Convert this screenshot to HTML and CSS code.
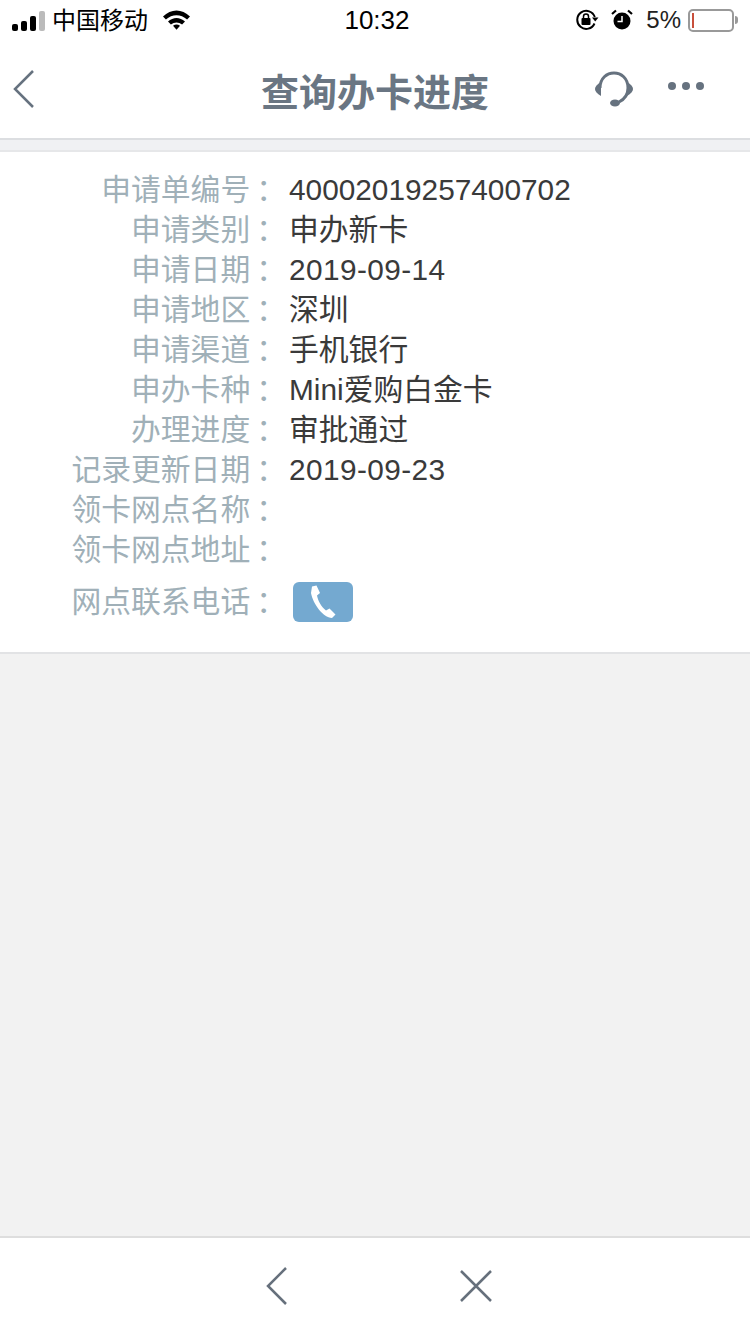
FILE: index.html
```html
<!DOCTYPE html>
<html lang="zh-CN">
<head>
    <meta charset="UTF-8">
    <meta name="viewport" content="width=device-width, initial-scale=1.0">
    <title>查询办卡进度</title>
    <link rel="stylesheet" href="styles.css">
</head>
<body>
    <div class="page">
        <!-- Status bar -->
        <div class="status-bar">
            <div class="status-left">
                <div class="signal">
                    <span class="bar bar-1"></span>
                    <span class="bar bar-2"></span>
                    <span class="bar bar-3"></span>
                    <span class="bar bar-4"></span>
                </div>
                <span class="carrier">中国移动</span>
                <svg class="wifi" width="29" height="20" viewBox="0 0 28 20">
                    <path d="M0.500 6.500C8.500-1.500 19.500-1.500 27.500 6.500L24.600 9.600C18.300 3.900 9.700 3.900 3.400 9.600Z" fill="#000"/>
                    <path d="M5.500 11.500C10.800 6.800 17.200 6.800 22.500 11.500L19.600 14.500C16.100 11.800 11.900 11.800 8.400 14.500Z" fill="#000"/>
                    <path d="M10.500 15.800C12.800 14.100 15.200 14.100 17.500 15.800L14 19.800Z" fill="#000"/>
                </svg>
            </div>
            <div class="status-time">10:32</div>
            <div class="status-right">
                <svg class="lock-icon" width="24" height="22" viewBox="0 0 24 22">
                    <path d="M19.500 14.500A9 9 0 1 1 19.800 8" fill="none" stroke="#000" stroke-width="2"/>
                    <path d="M17 8.500L23.500 8.500L20.200 12.500Z" fill="#000"/>
                    <rect x="6.500" y="9" width="9" height="7" rx="1" fill="#000"/>
                    <path d="M8.500 9V7.500A2.500 2.500 0 0 1 13.500 7.500V9" fill="none" stroke="#000" stroke-width="1.500"/>
                </svg>
                <svg class="alarm-icon" width="22" height="22" viewBox="0 0 22 22">
                    <circle cx="11" cy="12" r="8.500" fill="#000"/>
                    <path d="M11 7V12.500H6.500" fill="none" stroke="#fff" stroke-width="1.500"/>
                    <path d="M1 5L5 1.500M21 5L17 1.500" stroke="#000" stroke-width="2.200"/>
                </svg>
                <span class="battery-text">5%</span>
                <div class="battery">
                    <div class="battery-body"><span class="battery-level"></span></div>
                    <span class="battery-cap"></span>
                </div>
            </div>
        </div>

        <!-- Title bar -->
        <div class="nav-bar">
            <svg class="nav-back" width="24" height="40" viewBox="0 0 24 40">
                <path d="M21 2L3 20L21 38" fill="none" stroke="#66727f" stroke-width="2.500"/>
            </svg>
            <h1 class="nav-title">查询办卡进度</h1>
            <div class="nav-actions">
                <svg class="nav-service" width="38" height="36" viewBox="0 0 38 36">
                    <path d="M5 17C5 -3 33 -3 33 17C33 23 30 28 24 31" fill="none" stroke="#66727f" stroke-width="3"/>
                    <path d="M6 11C2 13 0 16 0 18C0 20 2 23 6 25Z" fill="#66727f"/>
                    <path d="M32 11C36 13 38 16 38 18C38 20 36 23 32 25Z" fill="#66727f"/>
                    <ellipse cx="20" cy="32" rx="5" ry="3.500" fill="#66727f"/>
                </svg>
                <div class="nav-more">
                    <span class="dot"></span>
                    <span class="dot"></span>
                    <span class="dot"></span>
                </div>
            </div>
        </div>

        <div class="nav-gap"></div>

        <!-- Application details -->
        <div class="detail-card">
            <div class="detail-row"><span class="detail-label">申请单编号<span class="colon">：</span></span><span class="detail-value">40002019257400702</span></div>
            <div class="detail-row"><span class="detail-label">申请类别<span class="colon">：</span></span><span class="detail-value">申办新卡</span></div>
            <div class="detail-row"><span class="detail-label">申请日期<span class="colon">：</span></span><span class="detail-value date-value">2019-09-14</span></div>
            <div class="detail-row"><span class="detail-label">申请地区<span class="colon">：</span></span><span class="detail-value">深圳</span></div>
            <div class="detail-row"><span class="detail-label">申请渠道<span class="colon">：</span></span><span class="detail-value">手机银行</span></div>
            <div class="detail-row"><span class="detail-label">申办卡种<span class="colon">：</span></span><span class="detail-value">Mini爱购白金卡</span></div>
            <div class="detail-row"><span class="detail-label">办理进度<span class="colon">：</span></span><span class="detail-value">审批通过</span></div>
            <div class="detail-row"><span class="detail-label">记录更新日期<span class="colon">：</span></span><span class="detail-value date-value">2019-09-23</span></div>
            <div class="detail-row"><span class="detail-label">领卡网点名称<span class="colon">：</span></span><span class="detail-value"></span></div>
            <div class="detail-row"><span class="detail-label">领卡网点地址<span class="colon">：</span></span><span class="detail-value"></span></div>
            <div class="detail-row phone-row">
                <span class="detail-label">网点联系电话<span class="colon">：</span></span>
                <span class="phone-button">
                    <svg width="30" height="34" viewBox="0 0 30 34">
                        <path d="M4 1.500L8.500 0.500L12 8L9 10.500C10 16 13.500 22 18 25.500L21.500 23.500L27.500 29.500L24 33C15 32.500 5 19 3 8Z" fill="#fff"/>
                    </svg>
                </span>
            </div>
        </div>

        <div class="page-fill"></div>

        <!-- Bottom toolbar -->
        <div class="bottom-bar">
            <svg width="24" height="40" viewBox="0 0 24 40">
                <path d="M21 2L3 20L21 38" fill="none" stroke="#66707c" stroke-width="2.500"/>
            </svg>
            <svg width="34" height="34" viewBox="0 0 34 34">
                <path d="M2 2L32 32M32 2L2 32" fill="none" stroke="#66707c" stroke-width="2.500"/>
            </svg>
        </div>
    </div>
</body>
</html>
```

FILE: styles.css
```css
/* Base Styles */
* {
    margin: 0;
    padding: 0;
    box-sizing: border-box;
}

body {
    font-family: 'Liberation Sans', 'Noto Sans CJK SC', sans-serif;
    background-color: #f2f2f2;
}

.page {
    width: 750px;
    height: 1334px;
    display: flex;
    flex-direction: column;
    overflow: hidden;
}

/* Status Bar */
.status-bar {
    height: 40px;
    background-color: #fff;
    display: flex;
    justify-content: space-between;
    align-items: center;
    padding: 0 12px 0 12px;
    color: #000;
    position: relative;
}

.status-left,
.status-right {
    display: flex;
    align-items: center;
}

.signal {
    display: flex;
    align-items: flex-end;
    gap: 3px;
    height: 20px;
    margin-top: 1px;
}

.bar {
    width: 6px;
    border-radius: 2px;
    background-color: #000;
}

.bar-1 {
    height: 7px;
}

.bar-2 {
    height: 10px;
}

.bar-3 {
    height: 15px;
}

.bar-4 {
    height: 20px;
    background-color: #bbb;
}

.carrier {
    font-size: 24px;
    line-height: 36px;
    margin: 2px 0 0 7px;
}

.wifi {
    margin-left: 14px;
}

.status-time {
    position: absolute;
    left: 0;
    right: 0;
    text-align: center;
    font-size: 26px;
    padding-left: 4px;
}

.alarm-icon {
    margin-left: 12px;
}

.battery-text {
    font-size: 24px;
    margin-left: 13px;
    color: #222;
}

.battery {
    display: flex;
    align-items: center;
    margin-left: 7px;
}

.battery-body {
    width: 46px;
    height: 23px;
    border: 2px solid #999;
    border-radius: 5px;
    padding: 2px 2px;
}

.battery-level {
    display: block;
    width: 2px;
    height: 100%;
    background-color: #c8503c;
}

.battery-cap {
    width: 3px;
    height: 8px;
    margin-left: 1px;
    border-radius: 0 3px 3px 0;
    background-color: #999;
}

/* Title Bar */
.nav-bar {
    height: 100px;
    background-color: #fff;
    border-bottom: 2px solid #dcdee1;
    position: relative;
    display: flex;
    align-items: center;
    justify-content: space-between;
    padding: 0 46px 10px 12px;
}

.nav-back {
    margin-top: 9px;
}

.nav-title {
    position: absolute;
    left: 0;
    right: 0;
    top: 29px;
    text-align: center;
    font-size: 38px;
    line-height: 48px;
    font-weight: 700;
    color: #6a7683;
}

.nav-actions {
    display: flex;
    align-items: center;
    gap: 35px;
}

.nav-service {
    margin-top: 9px;
}

.nav-more {
    display: flex;
    gap: 6px;
    margin-top: 4px;
}

.dot {
    width: 8px;
    height: 8px;
    border-radius: 50%;
    background-color: #66727f;
}

.nav-gap {
    height: 12px;
    background-color: #f0f1f3;
    border-bottom: 2px solid #e6e7e9;
}

/* Detail Card */
.detail-card {
    background-color: #fff;
    border-bottom: 2px solid #e2e3e5;
    padding: 18px 0 18px;
}

.detail-row {
    display: flex;
    align-items: center;
    height: 40px;
    font-size: 29.800px;
    line-height: 40px;
}

.detail-label {
    width: 280px;
    text-align: right;
    color: #a0b0b8;
    flex-shrink: 0;
}

/* the full-width colon sits mid-cell in the reference font */
.colon {
    padding-left: 6px;
    margin-right: -6px;
}

.detail-value {
    margin-left: 9px;
    color: #3a3a3a;
}

/* hyphens are wider in the reference font */
.date-value {
    letter-spacing: 0.400px;
}

.phone-row {
    height: 64px;
}

.phone-button {
    width: 60px;
    height: 40px;
    margin-left: 13px;
    border-radius: 6px;
    background-color: #74a9d0;
    display: flex;
    justify-content: center;
    align-items: center;
}

.page-fill {
    flex: 1;
    background-color: #f2f2f2;
}

/* Bottom Toolbar */
.bottom-bar {
    height: 98px;
    background-color: #fff;
    border-top: 2px solid #dedede;
    display: flex;
    align-items: center;
    padding: 0 0 0 265px;
    gap: 170px;
}
```
